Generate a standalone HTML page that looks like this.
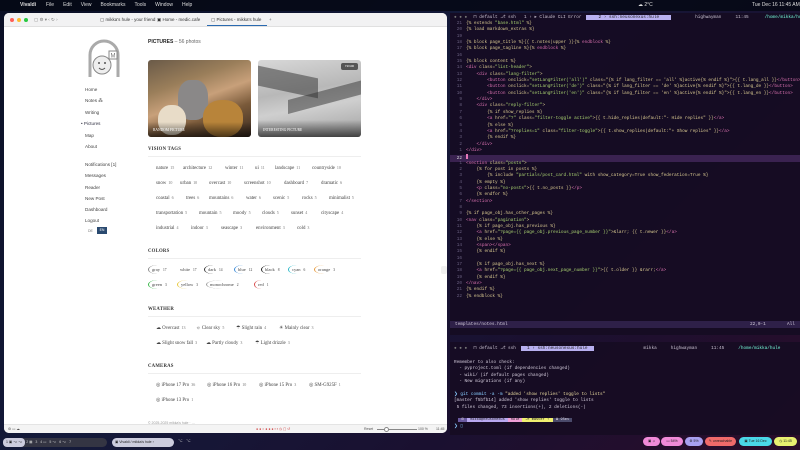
<!DOCTYPE html>
<html><head><meta charset="utf-8"><style>
*{margin:0;padding:0;box-sizing:border-box}
body{width:800px;height:450px;overflow:hidden;position:relative;font-family:"Liberation Sans",sans-serif;background:linear-gradient(135deg,#0a0f24 0%,#141a3a 40%,#1a1030 70%,#2a0d2a 100%)}
.a{position:absolute;white-space:nowrap}
.mb{top:0;left:0;width:800px;height:11px;background:rgba(5,8,20,.85);color:#ddd;font-size:5px;line-height:11px}
.win{left:4px;top:13px;width:443px;height:420px;background:#fff;border-radius:5px;overflow:hidden}
.tb{left:0;top:0;width:443px;height:14px;background:#f2f2f3;border-bottom:1px solid #e0e0e0;font-size:4.5px;color:#333;line-height:14px}
.dot{width:4px;height:4px;border-radius:50%;top:5px}
.nav{font-size:4.6px;color:#444}
.sec{font-family:"Liberation Serif",serif;font-size:4.8px;color:#333;font-weight:bold;letter-spacing:.2px}
.hr{height:1px;background:#eee;width:213px}
.tag{font-family:"Liberation Serif",serif;font-size:4.9px;color:#444}
.tag i{font-style:normal;font-size:4px;color:#777;margin-left:2px}
.col{font-family:"Liberation Serif",serif;font-size:4.5px;color:#444;border-left:1.2px solid;border-radius:50% 0 0 50%;padding-left:3px;height:9px;line-height:9px}
.col i{font-style:normal;font-size:3.6px;margin-left:3px}
.term{left:450px;top:13px;width:350px;height:322px;background:rgba(22,12,34,.93)}
.code{font-family:"Liberation Mono",monospace;font-size:4.4px;line-height:6.35px;color:#d8c890}
.code div{height:6.35px;white-space:pre}
.ln{color:#6a6080;display:inline-block;width:12px;text-align:right;margin-right:4px}
.t{color:#d870ae}.s{color:#a8d070}
.tt{font-family:"Liberation Mono",monospace;font-size:4.4px;color:#d0c8d8}
.pill{top:437px;height:9px;border-radius:5px;font-size:3.5px;line-height:9px;text-align:center;color:#222}
</style></head><body>
<div class="a mb"><span style="margin-left:20px;font-weight:bold">Vivaldi</span><span style="margin-left:10px">File</span><span style="margin-left:9px">Edit</span><span style="margin-left:9px">View</span><span style="margin-left:9px">Bookmarks</span><span style="margin-left:9px">Tools</span><span style="margin-left:9px">Window</span><span style="margin-left:9px">Help</span><span style="position:absolute;left:638px">☁ 2°C</span><span style="position:absolute;left:752px">Tue Dec 16 11:45 AM</span></div>

<div class="a win">
 <div class="a tb">
  <div class="a dot" style="left:6px;background:#ff5f57"></div><div class="a dot" style="left:13px;background:#febc2e"></div><div class="a dot" style="left:20px;background:#28c840"></div>
  <span class="a" style="left:30px;color:#777">▢ ⚙ ▾ ‹ ↻ ›</span>
  <span class="a" style="left:96px">▢ mikka's hule - your friend</span>
  <span class="a" style="left:153px">▣ Home - medic.cafe</span>
  <span class="a" style="left:207px">▢ Pictures - mikka's hule</span>
  <div class="a" style="left:203px;top:12px;width:60px;height:1px;background:#2a6ab0"></div>
  <span class="a" style="left:265px;color:#666">+</span>
 </div>
 <svg class="a" style="left:80px;top:26px" width="40" height="42" viewBox="0 0 40 42"><path d="M6 38V16a14 14 0 0 1 28 0v22" fill="none" stroke="#aaa" stroke-width="3"/><circle cx="18" cy="26" r="9" fill="#eee" stroke="#888" stroke-width="1"/><circle cx="15" cy="24" r="1" fill="#555"/><circle cx="21" cy="24" r="1" fill="#555"/><path d="M15 29q3 3 6 0" stroke="#555" fill="none"/><rect x="25" y="12" width="8" height="8" fill="#fff" stroke="#888"/><text x="26.5" y="18.5" font-size="6" fill="#777" font-family="Liberation Sans">M</text></svg>
 <div class="a nav" style="left:81px;top:74px">Home</div>
 <div class="a nav" style="left:81px;top:85px">Notes ⁂</div>
 <div class="a nav" style="left:81px;top:97px">Writing</div>
 <div class="a nav" style="left:77px;top:108px;color:#334">• Pictures</div>
 <div class="a nav" style="left:81px;top:120px">Map</div>
 <div class="a nav" style="left:81px;top:131px">About</div>
 <div class="a nav" style="left:81px;top:149px">Notifications [1]</div>
 <div class="a nav" style="left:81px;top:160px">Messages</div>
 <div class="a nav" style="left:81px;top:172px">Reader</div>
 <div class="a nav" style="left:81px;top:183px">New Post</div>
 <div class="a nav" style="left:81px;top:194px">Dashboard</div>
 <div class="a nav" style="left:81px;top:205px">Logout</div>
 <div class="a" style="left:84px;top:216px;font-size:3.5px;color:#777">DE</div>
 <div class="a" style="left:93px;top:214px;width:10px;height:7px;background:#2a4a70;color:#fff;font-size:3.5px;text-align:center;line-height:7px">EN</div>

 <div class="a" style="left:144px;top:26px;font-size:5px;color:#222"><b>PICTURES</b> <span style="color:#666">– 56 photos</span></div>
 <div class="a" style="left:144px;top:47px;width:103px;height:77px;border-radius:3px;background:linear-gradient(160deg,#6a5a48,#9a7e5a 30%,#c8a07a 50%,#7a5a3a 70%,#3a2a20);overflow:hidden"><div class="a" style="left:30px;top:20px;width:30px;height:40px;border-radius:40%;background:#8a8888"></div><div class="a" style="left:10px;top:45px;width:28px;height:30px;border-radius:45%;background:#e8dcc8"></div><div class="a" style="left:55px;top:40px;width:40px;height:37px;border-radius:45%;background:#b8843a"></div><div class="a" style="left:0;top:62px;width:103px;height:15px;background:linear-gradient(transparent,rgba(0,0,0,.6))"></div><div class="a" style="left:5px;top:68px;color:#fff;font-size:3.6px;font-family:'Liberation Serif',serif">RANDOM PICTURE</div></div>
 <div class="a" style="left:254px;top:47px;width:103px;height:77px;border-radius:3px;background:linear-gradient(170deg,#d8d8d8,#b8b8b8 40%,#cfcfcf 60%,#a0a0a0);overflow:hidden"><div class="a" style="left:0;top:12px;width:60px;height:20px;background:rgba(60,60,60,.55);transform:skewY(12deg)"></div><div class="a" style="left:30px;top:30px;width:75px;height:14px;background:rgba(50,50,50,.5);transform:skewY(-15deg)"></div><div class="a" style="left:83px;top:3px;width:17px;height:7px;background:#555;border-radius:2px;color:#fff;font-size:3px;text-align:center;line-height:7px">72/100</div><div class="a" style="left:0;top:60px;width:103px;height:17px;background:linear-gradient(transparent,rgba(0,0,0,.6))"></div><div class="a" style="left:5px;top:68px;color:#fff;font-size:3.6px;font-family:'Liberation Serif',serif">INTERESTING PICTURE</div></div>

 <div class="a sec" style="left:144px;top:134px">VISION TAGS</div><div class="a hr" style="left:144px;top:143px"></div>
 <div class="a tag" style="left:152px;top:152px">nature<i>15</i></div><div class="a tag" style="left:179px;top:152px">architecture<i>12</i></div><div class="a tag" style="left:221px;top:152px">winter<i>11</i></div><div class="a tag" style="left:251px;top:152px">ui<i>11</i></div><div class="a tag" style="left:271px;top:152px">landscape<i>11</i></div><div class="a tag" style="left:308px;top:152px">countryside<i>10</i></div>
 <div class="a tag" style="left:152px;top:167px">snow<i>10</i></div><div class="a tag" style="left:176px;top:167px">urban<i>10</i></div><div class="a tag" style="left:205px;top:167px">overcast<i>10</i></div><div class="a tag" style="left:240px;top:167px">screenshot<i>10</i></div><div class="a tag" style="left:280px;top:167px">dashboard<i>7</i></div><div class="a tag" style="left:317px;top:167px">dramatic<i>6</i></div>
 <div class="a tag" style="left:152px;top:182px">coastal<i>6</i></div><div class="a tag" style="left:182px;top:182px">trees<i>6</i></div><div class="a tag" style="left:205px;top:182px">mountains<i>6</i></div><div class="a tag" style="left:242px;top:182px">water<i>6</i></div><div class="a tag" style="left:269px;top:182px">scenic<i>5</i></div><div class="a tag" style="left:298px;top:182px">rocks<i>5</i></div><div class="a tag" style="left:325px;top:182px">minimalist<i>5</i></div>
 <div class="a tag" style="left:152px;top:197px">transportation<i>5</i></div><div class="a tag" style="left:195px;top:197px">mountain<i>5</i></div><div class="a tag" style="left:229px;top:197px">moody<i>5</i></div><div class="a tag" style="left:258px;top:197px">clouds<i>5</i></div><div class="a tag" style="left:287px;top:197px">sunset<i>4</i></div><div class="a tag" style="left:317px;top:197px">cityscape<i>4</i></div>
 <div class="a tag" style="left:152px;top:212px">industrial<i>4</i></div><div class="a tag" style="left:187px;top:212px">indoor<i>3</i></div><div class="a tag" style="left:217px;top:212px">seascape<i>3</i></div><div class="a tag" style="left:252px;top:212px">environment<i>3</i></div><div class="a tag" style="left:293px;top:212px">cold<i>3</i></div>

 <div class="a sec" style="left:144px;top:236px">COLORS</div><div class="a hr" style="left:144px;top:245px"></div>
 <div class="a col" style="left:144px;top:252px;border-color:#888">gray<i>17</i></div>
 <div class="a col" style="left:172px;top:252px;border-color:transparent">white<i>17</i></div>
 <div class="a col" style="left:200px;top:252px;border-color:#333">dark<i>14</i></div>
 <div class="a col" style="left:230px;top:252px;border-color:#3a8ad8">blue<i>12</i></div>
 <div class="a col" style="left:257px;top:252px;border-color:#222">black<i>8</i></div>
 <div class="a col" style="left:284px;top:252px;border-color:#2ab8c8">cyan<i>6</i></div>
 <div class="a col" style="left:310px;top:252px;border-color:#e89a3a">orange<i>3</i></div>
 <div class="a col" style="left:144px;top:267px;border-color:#3ab84a">green<i>3</i></div>
 <div class="a col" style="left:173px;top:267px;border-color:#e8c83a">yellow<i>3</i></div>
 <div class="a col" style="left:202px;top:267px;border-color:#999">monochrome<i>2</i></div>
 <div class="a col" style="left:250px;top:267px;border-color:#d84a4a">red<i>1</i></div>

 <div class="a sec" style="left:144px;top:294px">WEATHER</div><div class="a hr" style="left:144px;top:303px"></div>
 <div class="a tag" style="left:152px;top:312px">☁ Overcast<i>13</i></div><div class="a tag" style="left:192px;top:312px">☼ Clear sky<i>5</i></div><div class="a tag" style="left:232px;top:312px">☂ Slight rain<i>4</i></div><div class="a tag" style="left:275px;top:312px">☀ Mainly clear<i>3</i></div>
 <div class="a tag" style="left:152px;top:327px">☁ Slight snow fall<i>3</i></div><div class="a tag" style="left:202px;top:327px">☁ Partly cloudy<i>3</i></div><div class="a tag" style="left:251px;top:327px">☂ Light drizzle<i>3</i></div>

 <div class="a sec" style="left:144px;top:351px">CAMERAS</div><div class="a hr" style="left:144px;top:360px"></div>
 <div class="a tag" style="left:152px;top:369px">◎ iPhone 17 Pro<i>36</i></div><div class="a tag" style="left:203px;top:369px">◎ iPhone 16 Pro<i>10</i></div><div class="a tag" style="left:255px;top:369px">◎ iPhone 15 Pro<i>3</i></div><div class="a tag" style="left:305px;top:369px">◎ SM-G925F<i>1</i></div>
 <div class="a tag" style="left:152px;top:384px">◎ iPhone 13 Pro<i>1</i></div>
 <div class="a" style="left:144px;top:408px;font-size:3.5px;color:#999">© 2025-2025 mikka's hule · …</div>
 <div class="a" style="left:0;top:411px;width:443px;height:9px;background:#f4f4f4;border-top:1px solid #e4e4e4;font-size:3.5px;color:#555;line-height:9px"><span style="margin-left:4px">⚙ ▭ ☁</span><span style="position:absolute;left:252px;color:#c33">● ● ○ ● ● ● ▪ ▪ ◷ ▢ ↺</span><span style="position:absolute;left:360px">Reset</span><span style="position:absolute;left:373px;top:4px;width:40px;height:1px;background:#888"></span><span style="position:absolute;left:380px;top:2px;width:5px;height:5px;border-radius:50%;background:#fff;border:1px solid #888"></span><span style="position:absolute;left:414px">100 %</span><span style="position:absolute;left:432px">11:45</span></div>
</div>
<div class="a" style="left:441px;top:266px;width:6px;height:8px;background:#f0f0f0;border-radius:2px"></div>

<div class="a" style="left:3px;top:438px;width:104px;height:9px;border-radius:5px;background:rgba(60,60,70,.8);font-size:3.5px;color:#ccc;line-height:9px"><span style="display:inline-block;background:#ccd;color:#222;border-radius:4px;padding:0 3px">1 ▣ ⌥ ⌥</span> 2 ▦ &nbsp; 3 &nbsp; 4 ▭ &nbsp; 5 ⌥ &nbsp; 6 ⌥ &nbsp; 7</div>
<div class="a" style="left:112px;top:438px;width:62px;height:9px;border-radius:5px;background:#ccd;font-size:3.5px;color:#222;line-height:9px;padding-left:3px">▣ Vivaldi / mikka's hule ›</div>
<div class="a" style="left:178px;top:438px;font-size:4px;color:#ccc">⌥ &nbsp; ⌥</div>

<div class="a term">
 <div class="a tt" style="left:0;top:0px;width:350px;height:9px;line-height:9px;color:#c8c0d0"><span style="color:#777;margin-left:4px">● ● ●</span><span style="margin-left:6px">⊓ default ⎇ ssh</span><span style="margin-left:8px">1 › ▸ Claude CLI Error</span><span style="margin-left:5px;background:#b8b0f0;color:#222;padding:0 12px">2 › ssh:neusonexus:hule</span><span style="margin-left:24px">highwayman</span><span style="margin-left:14px">11:45</span><span style="margin-left:16px;color:#7fd">/home/mikka/hule</span></div>
 <div class="a" style="left:0;top:142px;width:350px;height:6.5px;background:#3a2250"></div>
 <div class="a code" style="left:0;top:8px">
<div><span class="ln">21</span>{% extends <span class="s">"base.html"</span> %}</div>
<div><span class="ln">20</span>{% load markdown_extras %}</div>
<div><span class="ln">19</span></div>
<div><span class="ln">18</span>{% block page_title %}{{ t.notes|upper }}{% <span class="t">endblock</span> %}</div>
<div><span class="ln">17</span>{% block page_tagline %}{% <span class="t">endblock</span> %}</div>
<div><span class="ln">16</span></div>
<div><span class="ln">15</span>{% block content %}</div>
<div><span class="ln">14</span><span class="t">&lt;div</span> class=<span class="s">"list-header"</span>&gt;</div>
<div><span class="ln">13</span>    <span class="t">&lt;div</span> class=<span class="s">"lang-filter"</span>&gt;</div>
<div><span class="ln">12</span>        <span class="t">&lt;button</span> onclick=<span class="s">"setLangFilter('all')"</span> class="{% if lang_filter == 'all' %}active{% endif %}"&gt;{{ t.lang_all }}<span class="t">&lt;/button&gt;</span></div>
<div><span class="ln">11</span>        <span class="t">&lt;button</span> onclick=<span class="s">"setLangFilter('de')"</span> class="{% if lang_filter == 'de' %}active{% endif %}"&gt;{{ t.lang_de }}<span class="t">&lt;/button&gt;</span></div>
<div><span class="ln">10</span>        <span class="t">&lt;button</span> onclick=<span class="s">"setLangFilter('en')"</span> class="{% if lang_filter == 'en' %}active{% endif %}"&gt;{{ t.lang_en }}<span class="t">&lt;/button&gt;</span></div>
<div><span class="ln">9</span>    <span class="t">&lt;/div&gt;</span></div>
<div><span class="ln">8</span>    <span class="t">&lt;div</span> class=<span class="s">"reply-filter"</span>&gt;</div>
<div><span class="ln">7</span>        {% if show_replies %}</div>
<div><span class="ln">6</span>        <span class="t">&lt;a</span> href=<span class="s">"?"</span> class=<span class="s">"filter-toggle active"</span>&gt;{{ t.hide_replies|default:"- Hide replies" }}<span class="t">&lt;/a&gt;</span></div>
<div><span class="ln">5</span>        {% else %}</div>
<div><span class="ln">4</span>        <span class="t">&lt;a</span> href=<span class="s">"?replies=1"</span> class=<span class="s">"filter-toggle"</span>&gt;{{ t.show_replies|default:"+ Show replies" }}<span class="t">&lt;/a&gt;</span></div>
<div><span class="ln">3</span>        {% endif %}</div>
<div><span class="ln">2</span>    <span class="t">&lt;/div&gt;</span></div>
<div><span class="ln">1</span><span class="t">&lt;/div&gt;</span></div>
<div><span class="ln" style="color:#ddd">22</span><span style="display:inline-block;width:2px;height:5px;border:1px solid #e478b8"></span></div>
<div><span class="ln">1</span><span class="t">&lt;section</span> class=<span class="s">"posts"</span>&gt;</div>
<div><span class="ln">2</span>    {% for post in posts %}</div>
<div><span class="ln">3</span>        {% include <span class="s">"partials/post_card.html"</span> with show_category=True show_federation=True %}</div>
<div><span class="ln">4</span>    {% empty %}</div>
<div><span class="ln">5</span>    <span class="t">&lt;p</span> class=<span class="s">"no-posts"</span>&gt;{{ t.no_posts }}<span class="t">&lt;/p&gt;</span></div>
<div><span class="ln">6</span>    {% endfor %}</div>
<div><span class="ln">7</span><span class="t">&lt;/section&gt;</span></div>
<div><span class="ln">8</span></div>
<div><span class="ln">9</span>{% if page_obj.has_other_pages %}</div>
<div><span class="ln">10</span><span class="t">&lt;nav</span> class=<span class="s">"pagination"</span>&gt;</div>
<div><span class="ln">11</span>    {% if page_obj.has_previous %}</div>
<div><span class="ln">12</span>    <span class="t">&lt;a</span> href=<span class="s">"?page={{ page_obj.previous_page_number }}"</span>&gt;&amp;larr; {{ t.newer }}<span class="t">&lt;/a&gt;</span></div>
<div><span class="ln">13</span>    {% else %}</div>
<div><span class="ln">14</span>    <span class="t">&lt;span&gt;&lt;/span&gt;</span></div>
<div><span class="ln">15</span>    {% endif %}</div>
<div><span class="ln">16</span></div>
<div><span class="ln">17</span>    {% if page_obj.has_next %}</div>
<div><span class="ln">18</span>    <span class="t">&lt;a</span> href=<span class="s">"?page={{ page_obj.next_page_number }}"</span>&gt;{{ t.older }} &amp;rarr;<span class="t">&lt;/a&gt;</span></div>
<div><span class="ln">19</span>    {% endif %}</div>
<div><span class="ln">20</span><span class="t">&lt;/nav&gt;</span></div>
<div><span class="ln">21</span>{% endif %}</div>
<div><span class="ln">22</span>{% endblock %}</div>
 </div>
 <div class="a tt" style="left:0;top:308px;width:350px;height:7px;background:#2e2048;line-height:7px;padding-left:5px">templates/notes.html<span style="position:absolute;left:300px">22,0-1</span><span style="position:absolute;left:337px">All</span></div>
</div>
<div class="a" style="left:450px;top:342px;width:350px;height:93px;background:rgba(22,12,34,.9)"></div>
<div class="a tt" style="left:450px;top:345px;width:350px;height:8px;line-height:8px;color:#c8c0d0"><span style="color:#777;margin-left:4px">● ● ●</span><span style="margin-left:6px">⊓ default ⎇ ssh</span><span style="margin-left:5px;background:#b8b0f0;color:#222;padding:0 6px">1 › ssh:neusonexus:hule</span><span style="margin-left:50px">mikka</span><span style="margin-left:14px">highwayman</span><span style="margin-left:14px">11:45</span><span style="margin-left:14px;color:#7fd">/home/mikka/hule</span></div>
<div class="a tt" style="left:454px;top:360px;line-height:6.4px">Remember to also check:<br>&nbsp; - pyproject.toml (if dependencies changed)<br>&nbsp; - wiki/ (if default pages changed)<br>&nbsp; - New migrations (if any)<br><br><span style="color:#8cf">❯ git commit -a -m <span style="color:#e8d9a0">"added 'show replies' toggle to lists"</span></span><br>[master f5bfb14] added 'show replies' toggle to lists<br>&nbsp;5 files changed, 73 insertions(+), 2 deletions(-)</div>
<div class="a tt" style="left:458px;top:417px;height:6px;line-height:6px;font-size:3.6px"><span style="background:#6a5aa0;padding:0 3px">⚙</span><span style="background:#b8a8f0;color:#222;padding:0 3px">mikka@neusonexus</span><span style="background:#f0a0d8;color:#222;padding:0 3px">hule</span><span style="background:#f0f070;color:#222;padding:0 3px">⎇ master ⇡</span><span style="background:#4a4a6a;padding:0 3px">⧗ 95ms</span></div>
<div class="a tt" style="left:454px;top:424px;color:#8cf">❯ ▯</div>

<div class="a pill" style="left:643px;width:17px;background:#f08ad8">▣ ♫</div>
<div class="a pill" style="left:661px;width:22px;background:#f08ad8">▭ 54%</div>
<div class="a pill" style="left:685px;width:18px;background:#a8a0f0">⚙ 5%</div>
<div class="a pill" style="left:705px;width:31px;background:#f06a6a">✎ unreachable</div>
<div class="a pill" style="left:739px;width:33px;background:#4ad8e8">▣ Tue 16 Dec</div>
<div class="a pill" style="left:774px;width:23px;background:#e8f070">◷ 11:45</div>
</body></html>
